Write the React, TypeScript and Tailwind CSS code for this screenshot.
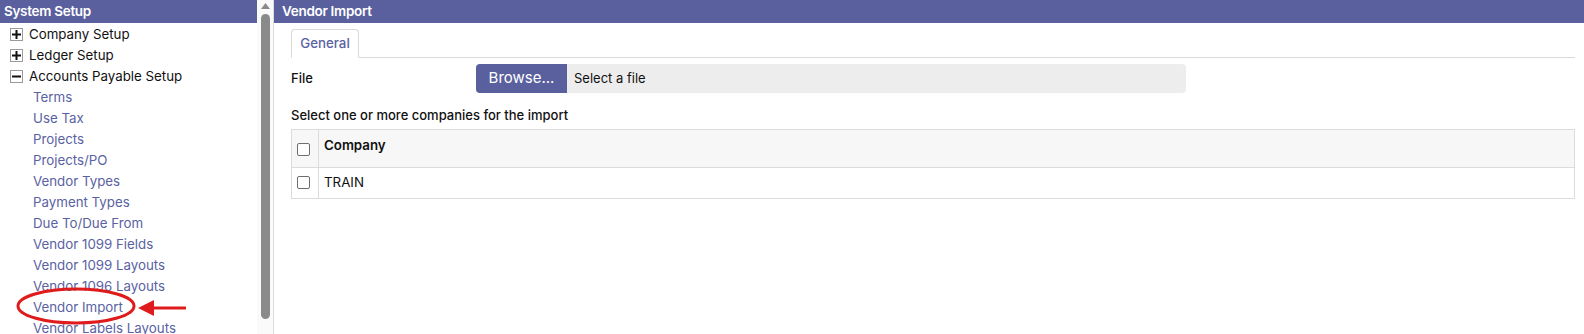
import { useState } from 'react'

const childItems = [
  'Terms',
  'Use Tax',
  'Projects',
  'Projects/PO',
  'Vendor Types',
  'Payment Types',
  'Due To/Due From',
  'Vendor 1099 Fields',
  'Vendor 1099 Layouts',
  'Vendor 1096 Layouts',
  'Vendor Import',
  'Vendor Labels Layouts',
]

function TreeToggle({ open }: { open: boolean }) {
  return (
    <span className="mr-[6px] flex h-[13px] w-[13px] items-center justify-center border border-[#9a9a9a] bg-white">
      <svg width="9" height="9" viewBox="0 0 9 9">
        <rect x="0" y="3.5" width="9" height="2" fill="#111" />
        {!open && <rect x="3.5" y="0" width="2" height="9" fill="#111" />}
      </svg>
    </span>
  )
}

export default function App() {
  const [checked, setChecked] = useState(false)

  return (
    <div className="relative flex h-[334px] w-[1584px] overflow-hidden bg-white font-['Inter',sans-serif] text-[13.3px] text-[#111]">
      {/* Sidebar */}
      <aside className="flex w-[274px] shrink-0 border-r border-[#dcdcdc]">
        <div className="w-[257px]">
          <div className="flex h-[23px] items-center bg-[#5a5f9e] pl-[4px] text-[13.5px] font-semibold tracking-[-0.3px] text-white">
            System Setup
          </div>
          <ul className="pt-[1px]">
            <li className="flex h-[21px] items-center pl-[10px]">
              <TreeToggle open={false} />
              Company Setup
            </li>
            <li className="flex h-[21px] items-center pl-[10px]">
              <TreeToggle open={false} />
              Ledger Setup
            </li>
            <li className="flex h-[21px] items-center pl-[10px]">
              <TreeToggle open />
              Accounts Payable Setup
            </li>
            {childItems.map((item) => (
              <li key={item} className="flex h-[21px] items-center pl-[33px] text-[#5a62a2]">
                {item}
              </li>
            ))}
          </ul>
        </div>

        {/* Scrollbar */}
        <div className="flex w-[16px] flex-col items-center bg-[#fafafa] pt-[3px]">
          <svg width="9" height="6" viewBox="0 0 9 6">
            <path d="M4.5 0 L9 6 L0 6 Z" fill="#8a8a8a" />
          </svg>
          <div className="mt-[5px] h-[305px] w-[9px] rounded-full bg-[#8a8a8a]" />
        </div>
      </aside>

      {/* Main */}
      <main className="flex-1">
        <div className="flex h-[23px] items-center bg-[#5a5f9e] pl-[8px] text-[13.5px] font-semibold tracking-[-0.3px] text-white">
          Vendor Import
        </div>

        <div className="pl-[17px] pr-[9px]">
          <div className="mt-[6px] flex border-b border-[#d9d9d9]">
            <div className="-mb-px flex h-[29px] w-[68px] items-center justify-center rounded-t-[4px] border border-b-white border-[#d9d9d9] bg-white text-[13.3px] font-medium text-[#5a62a2]">
              General
            </div>
          </div>

          <div className="mt-[6px] flex h-[29px] items-center">
            <div className="w-[185px] text-[13px] font-medium">File</div>
            <div className="flex h-[29px] w-[710px] overflow-hidden rounded-[4px] bg-[#ededed]">
              <button className="h-full w-[91px] bg-[#5a5f9e] text-[15px] text-white">Browse...</button>
              <span className="flex items-center pl-[7px] text-[13px]">Select a file</span>
            </div>
          </div>

          <div className="mt-[13px] text-[13px] font-medium">Select one or more companies for the import</div>

          <table className="mt-[3px] w-full border-collapse border border-[#dcdcdc] text-[13.3px]">
            <thead>
              <tr className="h-[38px] bg-[#f7f7f7]">
                <th className="w-[27px] border-r border-[#dcdcdc] pl-[5px] align-middle">
                  <span className="mt-[3px] block h-[13px] w-[13px] rounded-[2px] border border-[#6e6e6e] bg-white" />
                </th>
                <th className="pl-[5px] pb-[4px] text-left font-semibold">Company</th>
              </tr>
            </thead>
            <tbody>
              <tr className="h-[31px] border-t border-[#dcdcdc]">
                <td className="border-r border-[#dcdcdc] pl-[5px]">
                  <span
                    onClick={() => setChecked(!checked)}
                    className="block h-[13px] w-[13px] rounded-[2px] border border-[#6e6e6e] bg-white"
                  />
                </td>
                <td className="pl-[5px]">TRAIN</td>
              </tr>
            </tbody>
          </table>
        </div>
      </main>

      {/* Red annotation over the sidebar */}
      <svg className="pointer-events-none absolute left-0 top-0" width="200" height="334" viewBox="0 0 200 334">
        <ellipse cx="76" cy="306" rx="58" ry="17" fill="none" stroke="#e01b1b" strokeWidth="3" />
        <line x1="150" y1="308" x2="186" y2="308" stroke="#e01b1b" strokeWidth="3" />
        <path d="M138 308 L154 300 L154 316 Z" fill="#e01b1b" />
      </svg>
    </div>
  )
}
